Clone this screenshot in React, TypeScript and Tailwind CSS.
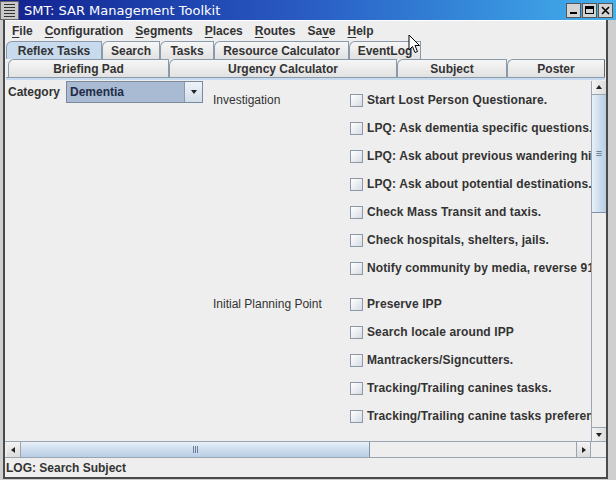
import React from "react";

const investigation = [
  "Start Lost Person Questionare.",
  "LPQ: Ask dementia specific questions.",
  "LPQ: Ask about previous wandering history.",
  "LPQ: Ask about potential destinations.",
  "Check Mass Transit and taxis.",
  "Check hospitals, shelters, jails.",
  "Notify community by media, reverse 911.",
];

const planning = [
  "Preserve IPP",
  "Search locale around IPP",
  "Mantrackers/Signcutters.",
  "Tracking/Trailing canines tasks.",
  "Tracking/Trailing canine tasks preferences.",
];

function Mnemonic({ text, at }: { text: string; at: number }) {
  return (
    <span>
      {text.slice(0, at)}
      <span className="underline underline-offset-2">{text[at]}</span>
      {text.slice(at + 1)}
    </span>
  );
}

function TitleBar() {
  return (
    <div className="h-[20px] flex items-center bg-gradient-to-r from-[#14208f] via-[#2a5cc4] to-[#44b0ec] shrink-0">
      {/* window menu icon */}
      <div className="w-[19px] h-[19px] bg-[#c8c8c8] border border-[#666] flex flex-col justify-center gap-[2px] px-[3px]">
        <div className="h-[1px] bg-[#333]" />
        <div className="h-[1px] bg-[#333]" />
        <div className="h-[1px] bg-[#333]" />
        <div className="h-[1px] bg-[#333]" />
        <div className="h-[1px] bg-[#333]" />
      </div>
      <span className="ml-[5px] text-white text-[13px] font-['DejaVu_Sans',sans-serif] leading-none">
        SMT: SAR Management Toolkit
      </span>
      <div className="ml-auto mr-[3px] flex gap-[1px]">
        <div className="w-[15px] h-[15px] bg-[#d4d4d4] border border-[#555] flex items-end justify-center pb-[3px]">
          <div className="w-[7px] h-[2px] bg-black" />
        </div>
        <div className="w-[15px] h-[15px] bg-[#d4d4d4] border border-[#555] flex items-center justify-center">
          <div className="w-[9px] h-[8px] border border-black border-t-[3px]" />
        </div>
        <div className="w-[15px] h-[15px] bg-[#d4d4d4] border border-[#555] flex items-center justify-center">
          <svg width="9" height="9" viewBox="0 0 9 9">
            <path d="M1 1 L8 8 M8 1 L1 8" stroke="black" strokeWidth="1.6" />
          </svg>
        </div>
      </div>
    </div>
  );
}

function MenuBar() {
  const items: [string, number][] = [
    ["File", 0],
    ["Configuration", 0],
    ["Segments", 0],
    ["Places", 0],
    ["Routes", 0],
    ["Save", 2],
    ["Help", 0],
  ];
  return (
    <div className="h-[21px] flex items-center pl-[1px] bg-[#eeeeee] border-t border-white shrink-0">
      {items.map(([t, i]) => (
        <div key={t} className="px-[6px] text-[12px] font-bold text-[#333]">
          <Mnemonic text={t} at={i} />
        </div>
      ))}
    </div>
  );
}

function Tab({ label, className, selected }: { label: string; className: string; selected?: boolean }) {
  return (
    <div
      className={`h-[18px] flex items-center justify-center text-[12px] font-bold text-[#333] border border-b-0 border-[#8a9aab] rounded-tl-[6px] ${
        selected ? "bg-[#c8daee]" : "bg-gradient-to-b from-[#f6f6f6] to-[#e2e2e2]"
      } ${className}`}
    >
      {label}
    </div>
  );
}

function Tabs() {
  return (
    <div className="flex flex-col pl-[1px] shrink-0">
      <div className="flex">
        <Tab label="Reflex Tasks" className="w-[96px]" selected />
        <Tab label="Search" className="w-[58px]" />
        <Tab label="Tasks" className="w-[54px]" />
        <Tab label="Resource Calculator" className="w-[135px]" />
        <Tab label="EventLog" className="w-[72px]" />
      </div>
      <div className="flex pl-[2px]">
        <Tab label="Briefing Pad" className="w-[161px]" />
        <Tab label="Urgency Calculator" className="w-[228px]" />
        <Tab label="Subject" className="w-[110px]" />
        <Tab label="Poster" className="w-[98px] border-r-[#666]" />
      </div>
      <div className="h-[3px] bg-[#c8daee] border-t border-[#8a9aab] mr-[1px]" />
    </div>
  );
}

function CheckRow({ label }: { label: string }) {
  return (
    <div className="h-[28px] flex items-center whitespace-nowrap">
      <div className="w-[13px] h-[13px] border border-[#8d99a6] bg-gradient-to-br from-white to-[#d6dce4] shrink-0" />
      <span className="ml-[4px] text-[12px] font-bold text-[#333] tracking-[0.12px]">{label}</span>
    </div>
  );
}

function Group({ title, items, className }: { title: string; items: string[]; className?: string }) {
  return (
    <div className={`flex ${className ?? ""}`}>
      <div className="w-[138px] shrink-0 h-[28px] flex items-center pl-[1px] text-[12px] text-[#333]">{title}</div>
      <div className="flex flex-col">
        {items.map((t) => (
          <CheckRow key={t} label={t} />
        ))}
      </div>
    </div>
  );
}

function Arrow({ dir }: { dir: "up" | "down" | "left" | "right" }) {
  const d =
    dir === "up"
      ? "M1 5 L4 1 L7 5 Z"
      : dir === "down"
      ? "M1 2 L7 2 L4 6 Z"
      : dir === "left"
      ? "M5 1 L5 7 L1 4 Z"
      : "M2 1 L2 7 L6 4 Z";
  return (
    <svg width="8" height="8" viewBox="0 0 8 8">
      <path d={d} fill="#222" />
    </svg>
  );
}

function Content() {
  return (
    <div className="flex-1 min-h-0 flex flex-col">
      <div className="flex-1 min-h-0 flex">
        {/* viewport */}
        <div className="flex-1 min-w-0 overflow-hidden flex pt-[1px]">
          <div className="w-[207px] shrink-0 flex items-start pl-[3px]">
            <div className="h-[22px] flex items-center gap-[6px]">
              <span className="text-[12px] font-bold text-[#333]">Category</span>
              <div className="w-[137px] h-[22px] flex border border-[#7a8a9c] bg-[#a9bbd3]">
                <div className="flex-1 flex items-center pl-[3px] text-[12px] font-bold text-[#1f2b48]">Dementia</div>
                <div className="w-[18px] bg-gradient-to-b from-[#eef3f8] to-[#d2dde9] border-l border-[#8a9aab] flex items-center justify-center">
                  <Arrow dir="down" />
                </div>
              </div>
            </div>
          </div>
          <div className="flex flex-col pt-[5px]">
            <Group title="Investigation" items={investigation} />
            <Group title="Initial Planning Point" items={planning} className="mt-[8px]" />
          </div>
        </div>
        {/* vertical scrollbar */}
        <div className="w-[15px] shrink-0 flex flex-col bg-[#eeeeee] border-l border-[#9aa5b1] mt-[1px]">
          <div className="h-[14px] flex items-center justify-center border-b border-[#9aa5b1] bg-gradient-to-r from-[#f4f4f4] to-[#dcdcdc]">
            <Arrow dir="up" />
          </div>
          <div className="h-[118px] bg-gradient-to-r from-[#e8f0f8] via-[#cfdeee] to-[#b9cde3] border-b border-[#7d93ab] flex items-center justify-center text-[#5a6e86] text-[11px] leading-none">
            ≡
          </div>
          <div className="flex-1" />
          <div className="h-[14px] flex items-center justify-center border-t border-[#9aa5b1] bg-gradient-to-r from-[#f4f4f4] to-[#dcdcdc]">
            <Arrow dir="down" />
          </div>
        </div>
      </div>
      {/* horizontal scrollbar */}
      <div className="h-[17px] shrink-0 flex border-t border-[#9aa5b1] border-b">
        <div className="flex-1 flex ml-[2px]">
          <div className="w-[14px] flex items-center justify-center border-r border-[#9aa5b1] bg-gradient-to-b from-[#f4f4f4] to-[#dcdcdc]">
            <Arrow dir="left" />
          </div>
          <div className="w-[349px] bg-gradient-to-b from-[#e8f0f8] via-[#cfdeee] to-[#b9cde3] border-r border-[#7d93ab] flex items-center justify-center">
            <div className="flex gap-[1px]">
              <div className="w-[1px] h-[7px] bg-[#6d809a]" />
              <div className="w-[1px] h-[7px] bg-[#6d809a]" />
              <div className="w-[1px] h-[7px] bg-[#6d809a]" />
            </div>
          </div>
          <div className="flex-1 bg-[#eeeeee]" />
          <div className="w-[14px] flex items-center justify-center border-l border-[#9aa5b1] bg-gradient-to-b from-[#f4f4f4] to-[#dcdcdc]">
            <Arrow dir="right" />
          </div>
        </div>
        <div className="w-[16px] bg-[#eeeeee] border-l border-[#9aa5b1]" />
      </div>
    </div>
  );
}

export default function App() {
  return (
    <div className="relative w-[616px] h-[480px] bg-[#cfcfcf] flex flex-col overflow-hidden font-['Liberation_Sans',Arial,sans-serif]">
      <TitleBar />
      <div className="flex-1 min-h-0 flex flex-col ml-[3px] mr-[8px] mb-[1px] border-x-2 border-b-2 border-[#4a4a4a] bg-[#eeeeee]">
        <MenuBar />
        <Tabs />
        <Content />
        <div className="h-[19px] shrink-0 flex items-center text-[12px] font-bold text-[#333] pl-[1px]">
          LOG: Search Subject
        </div>
      </div>
      {/* mouse pointer */}
      <svg className="absolute left-[408px] top-[34px]" width="13" height="20" viewBox="0 0 13 20">
        <path d="M1 1 L1 16 L4.5 12.5 L7 18.5 L9.5 17.5 L7 11.5 L11.5 11.5 Z" fill="white" stroke="black" strokeWidth="1" />
      </svg>
    </div>
  );
}
